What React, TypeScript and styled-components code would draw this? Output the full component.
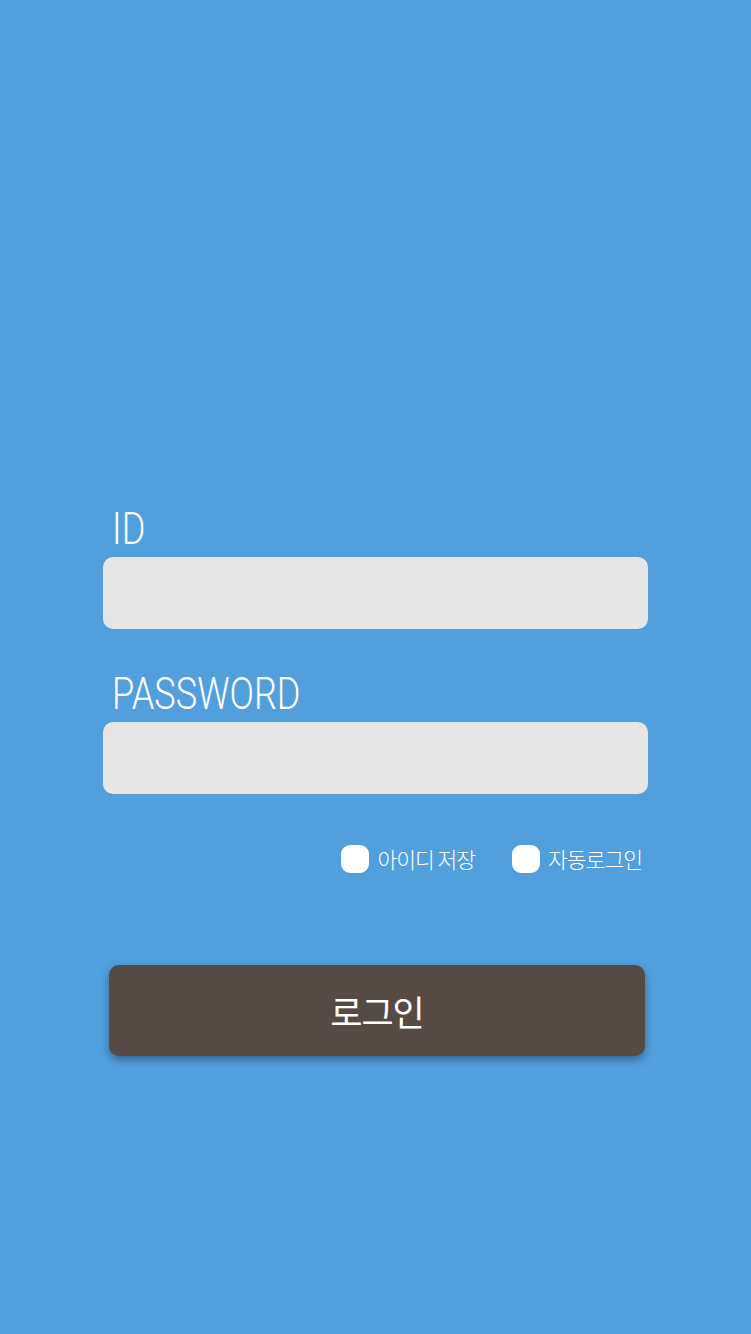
import { useState } from "react";
import styled, { createGlobalStyle } from "styled-components";

const GlobalStyle = createGlobalStyle`
  html, body {
    margin: 0;
    padding: 0;
    background-color: #529fdd;
  }
  * {
    box-sizing: border-box;
  }
`;

const App = () => {
  const [saveId, setSaveId] = useState(false);
  const [autoLogin, setAutoLogin] = useState(false);

  return (
    <Page>
      <GlobalStyle />
      <LoginForm onSubmit={(e) => e.preventDefault()}>
        <Label htmlFor="user-id">ID</Label>
        <TextInput id="user-id" type="text" />
        <Label htmlFor="user-pw" spaced>
          PASSWORD
        </Label>
        <TextInput id="user-pw" type="password" />
        <OptionRow>
          <Option onClick={() => setSaveId(!saveId)}>
            <CheckBox checked={saveId} />
            <OptionText>아이디 저장</OptionText>
          </Option>
          <Option onClick={() => setAutoLogin(!autoLogin)}>
            <CheckBox checked={autoLogin} />
            <OptionText>자동로그인</OptionText>
          </Option>
        </OptionRow>
        <LoginButton type="submit">로그인</LoginButton>
      </LoginForm>
    </Page>
  );
};
export default App;

const Page = styled.div`
  min-height: 1334px;
  background-color: #529fdd;
  padding-top: 505px;
  font-family: Roboto, "Noto Sans CJK KR", sans-serif;
`;

const LoginForm = styled.form`
  width: 545px;
  margin: 0 auto;
  display: flex;
  flex-direction: column;
`;

const Label = styled.label<{ spaced?: boolean }>`
  display: block;
  margin-top: ${({ spaced }) => (spaced ? "41px" : "0")};
  margin-bottom: 4px;
  padding-left: 11px;
  font-size: 44px;
  font-weight: 300;
  line-height: 48px;
  color: #ffffff;
  transform: scaleX(0.82);
  transform-origin: left center;
`;

const TextInput = styled.input`
  width: 100%;
  height: 72px;
  border: none;
  outline: none;
  border-radius: 10px;
  background-color: #e6e6e6;
  padding: 0 16px;
  font-size: 22px;
`;

const OptionRow = styled.div`
  display: flex;
  justify-content: flex-end;
  align-items: center;
  gap: 37px;
  margin-top: 49px;
  padding-right: 6px;
`;

const Option = styled.div`
  display: flex;
  align-items: center;
  gap: 8px;
  cursor: pointer;
`;

const CheckBox = styled.span<{ checked: boolean }>`
  width: 28px;
  height: 28px;
  border-radius: 9px;
  background-color: ${({ checked }) => (checked ? "#564a45" : "#ffffff")};
  border: 6px solid #ffffff;
`;

const OptionText = styled.span`
  font-family: "Noto Sans CJK KR", sans-serif;
  font-size: 21.5px;
  font-weight: 300;
  color: #ffffff;
  letter-spacing: -1px;
`;

const LoginButton = styled.button`
  width: 536px;
  height: 91px;
  margin: 91px 0 0 6px;
  border: none;
  border-radius: 10px;
  background-color: #564a45;
  box-shadow: 0 4px 8px rgba(0, 0, 0, 0.35);
  color: #ffffff;
  font-family: "Noto Sans CJK KR", sans-serif;
  font-size: 35px;
  font-weight: 400;
  letter-spacing: -1px;
  cursor: pointer;
`;
